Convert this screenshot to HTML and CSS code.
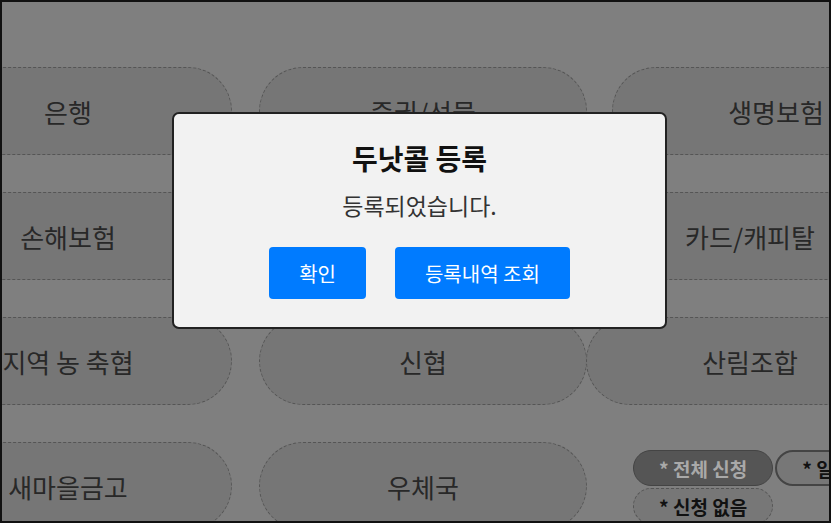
FILE: index.html
```html
<!DOCTYPE html>
<html>
    <head>
        <title>두낫콜 등록</title>
        <link rel="stylesheet" href="styles.css">
    </head>

    <body>
        <div class="frame">
            <div class="board">
                <div class="row">
                    <div class="pill">은행</div>
                    <div class="pill">증권/선물</div>
                    <div class="pill pill-wide-gap">생명보험</div>
                </div>
                <div class="row">
                    <div class="pill">손해보험</div>
                    <div class="pill"></div>
                    <div class="pill">카드/캐피탈</div>
                </div>
                <div class="row">
                    <div class="pill">지역 농 축협</div>
                    <div class="pill">신협</div>
                    <div class="pill">산림조합</div>
                </div>
                <div class="row">
                    <div class="pill">새마을금고</div>
                    <div class="pill">우체국</div>
                    <div class="options">
                        <span class="chip chip-all">* 전체 신청</span>
                        <span class="chip chip-some">* 일부 신청</span>
                        <span class="chip chip-none">* 신청 없음</span>
                    </div>
                </div>
            </div>

            <div class="modal">
                <h2>두낫콜 등록</h2>
                <p>등록되었습니다.</p>
                <div class="modal-buttons">
                    <button type="button">확인</button>
                    <button type="button">등록내역 조회</button>
                </div>
            </div>
        </div>
    </body>
</html>
```

FILE: styles.css
```css
body {
    margin: 0;
    font-family: "Noto Sans CJK KR", "Noto Sans", sans-serif;
    background-color: #7f7f7f;
}

.frame {
    position: relative;
    width: 831px;
    height: 523px;
    box-sizing: border-box;
    border: 2px solid #111;
    background-color: #7f7f7f;
    overflow: hidden;
}

.board {
    display: flex;
    flex-direction: column;
    gap: 37px;
    padding-top: 65px;
    margin-left: -98px;
}

.row {
    display: flex;
    align-items: flex-start;
    gap: 27px;
    height: 88px;
}

.pill {
    flex: none;
    display: flex;
    align-items: center;
    justify-content: center;
    width: 328px;
    height: 88px;
    box-sizing: border-box;
    border: 1px dashed #555;
    border-radius: 44px;
    background-color: #767676;
    color: #282828;
    font-size: 26px;
    white-space: nowrap;
}

.row .pill:nth-child(3) {
    margin-left: -28px;
}

.row .pill-wide-gap:nth-child(3) {
    margin-left: -2px;
}

.options {
    flex: none;
    display: flex;
    flex-wrap: wrap;
    gap: 2px;
    width: 320px;
    margin-left: 19px;
    padding-top: 8px;
}

.chip {
    display: inline-flex;
    align-items: center;
    height: 36px;
    box-sizing: border-box;
    padding: 0 25px;
    border-radius: 18px;
    font-size: 19px;
    font-weight: bold;
    color: #111;
    background-color: #777;
    white-space: nowrap;
}

.chip-all {
    background-color: #555;
    border: 1px solid #444;
    color: #a9a9a9;
}

.chip-some {
    border: 2px solid #444;
}

.chip-none {
    border: 1px dashed #555;
}

.modal {
    position: absolute;
    left: 170px;
    top: 110px;
    width: 495px;
    box-sizing: border-box;
    padding: 28px 0 28px;
    background-color: #f2f2f2;
    border: 2px solid #222;
    border-radius: 7px;
    text-align: center;
}

.modal h2 {
    margin: 0;
    font-size: 28px;
    line-height: 32px;
    font-weight: bold;
    color: #111;
}

.modal p {
    margin: 18px 0 0;
    font-size: 23px;
    line-height: 27px;
    color: #333;
}

.modal-buttons {
    display: flex;
    justify-content: center;
    gap: 29px;
    margin-top: 28px;
}

.modal-buttons button {
    height: 52px;
    padding: 0 30px;
    border: none;
    border-radius: 4px;
    background-color: #007bff;
    color: #fff;
    font-family: inherit;
    font-size: 20px;
    cursor: pointer;
}
```
